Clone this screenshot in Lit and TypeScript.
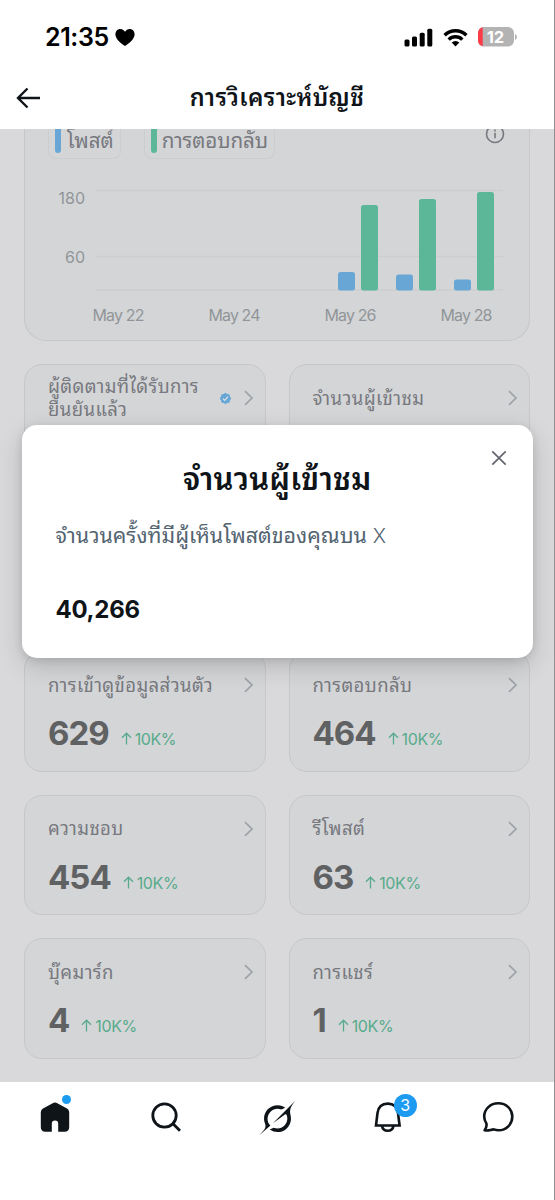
import { LitElement, html, svg, css } from "lit";
import { customElement, property } from "lit/decorators.js";

@customElement("metric-card")
class MetricCard extends LitElement {
  @property() label = "";
  @property() second = "";
  @property() value = "";
  @property({ type: Boolean }) verified = false;

  static styles = css`
    :host { display: block; box-sizing: border-box; height: 120.5px; border: 1.5px solid #c5c7ca; border-radius: 18px;
      background: #d4d5d7; padding: 21px 11px 0 23px; color: #77797f; }
    .top { display: flex; align-items: center; height: 24px; }
    .label { flex: 1; font-size: 18.5px; line-height: 23px; white-space: nowrap; letter-spacing: 0.4px; }
    .badge { margin-right: 12px; }
    svg { display: block; }
    .bottom { display: flex; align-items: baseline; margin-top: 15px; height: 42px; }
    .value { font-size: 33px; line-height: 42px; font-weight: 700; color: #5f6163; letter-spacing: -1px; }
    .arrow { margin: 0 3px 0 12px; }
    .pct { font-size: 16px; color: #57ab8b; letter-spacing: -0.4px; }
  `;

  render() {
    return html`
      <div class="top">
        <div class="label">${this.label}${this.second ? html`<br />${this.second}` : ""}</div>
        ${this.verified
          ? html`<svg class="badge" width="13" height="13" viewBox="0 0 22 22"><path fill="#68a7d5" d="M20.400 11c0-1.300-.8-2.500-2-3.100.4-1.300.1-2.700-.8-3.500-.9-.9-2.200-1.200-3.500-.8C13.500 2.400 12.300 1.600 11 1.600S8.500 2.400 7.900 3.600c-1.300-.4-2.600-.1-3.500.8s-1.200 2.200-.8 3.500C2.400 8.500 1.600 9.700 1.600 11s.8 2.500 2 3.100c-.4 1.300-.1 2.600.8 3.500s2.200 1.200 3.500.8c.6 1.200 1.800 2 3.100 2s2.500-.8 3.100-2c1.300.4 2.600.1 3.500-.8s1.200-2.200.8-3.500c1.200-.6 2-1.800 2-3.100z"/><path d="M6.800 11.300l2.900 2.900 5.500-6.200" fill="none" stroke="#dfe3e6" stroke-width="2"/></svg>`
          : ""}
        <svg width="10" height="16" viewBox="0 0 10 16"><path d="M1 1.200L8 8l-7 6.800" fill="none" stroke="#9da3a9" stroke-width="1.700"/></svg>
      </div>
      ${this.value
        ? html`<div class="bottom"><span class="value">${this.value}</span>
            <svg class="arrow" width="11" height="13" viewBox="0 0 11 13"><path d="M5.500 12.500V1.200M1 5.700l4.500-4.500L10 5.700" fill="none" stroke="#57ab8b" stroke-width="1.300"/></svg><span class="pct">10K%</span></div>`
        : ""}
    `;
  }
}

@customElement("app-root")
class AppRoot extends LitElement {
  static styles = css`
    :host { display: block; position: relative; box-sizing: border-box; width: 555px; height: 1200px; overflow: hidden;
      background: #fff; border-right: 1px solid #8f8f91; font-family: Inter, "Liberation Sans", "Noto Sans Thai Looped", Loma, "Noto Sans Thai", sans-serif; color: #0f1419; }
    svg { display: block; }
    .status { display: flex; align-items: center; height: 74px; padding: 0 37.5px 0 45px; box-sizing: border-box; }
    .time { font-size: 25px; font-weight: 600; letter-spacing: -0.4px; color: #000; }
    .heart { margin-left: 6.5px; }
    .signal { margin-left: auto; }
    .wifi { margin-left: 10px; }
    .battery { margin-left: 9.5px; }
    .bar { display: grid; grid-template-columns: 60px 1fr 60px; align-items: center; height: 55px; padding-bottom: 7px; box-sizing: border-box; }
    .back { margin-left: 16px; }
    .bar h1 { margin: 0; text-align: center; font-size: 23.5px; font-weight: 600; line-height: 40px; letter-spacing: 0.4px; white-space: nowrap; }
    .content { height: 952.5px; box-sizing: border-box; background: #d9d9db; overflow: hidden; padding: 0 24px; }
    .chart { box-sizing: border-box; width: 506px; height: 212px; background: #d4d5d7; border: 1.5px solid #c5c7ca; border-top: 0; border-radius: 0 0 22px 22px; }
    .legend { display: flex; height: 30px; padding: 0 23px; }
    .chip { display: flex; align-items: center; box-sizing: border-box; height: 30px; border: 1.5px solid #cbcdd0; border-top: 0;
      border-radius: 0 0 8px 8px; padding: 0 6px 5px 6px; font-size: 20.6px; line-height: 24px; color: #77797f; white-space: nowrap; }
    .chip i { width: 6px; height: 24px; border-radius: 0 0 3px 3px; background: #68a7d5; margin-right: 6px; }
    .chip.green { margin-left: 23px; letter-spacing: -0.1px; }
    .chip.green i { background: #5bb798; margin-right: 5px; }
    .info { margin: -5px 1px 0 auto; }
    .grid { display: grid; grid-template-columns: 241.5px 241.5px; column-gap: 23px; row-gap: 23px; margin-top: 23px; }
    .nav { display: grid; grid-template-columns: repeat(5, 110.75px); height: 118.5px; align-items: start; padding: 18px 0 0 0; box-sizing: border-box; }
    .item { display: flex; justify-content: center; position: relative; }
    .dot { position: absolute; left: 62px; top: -4.5px; width: 9px; height: 9px; border-radius: 50%; background: #1d9bf0; }
    .count { position: absolute; left: 61.5px; top: -5.5px; width: 23px; height: 23px; border-radius: 50%; background: #1d9bf0; color: #fff; font-size: 16px; line-height: 23px; text-align: center; }
    .modal { position: absolute; left: 21.5px; top: 425px; width: 511.5px; height: 232.5px; box-sizing: border-box; background: #fff; border-radius: 15px;
      box-shadow: 0 8px 24px rgba(0,0,0,.16), 0 2px 8px rgba(0,0,0,.1); padding: 32px 34px 0; }
    .close { position: absolute; right: 26px; top: 25px; }
    .modal h2 { margin: 0; text-align: center; font-size: 31px; line-height: 44px; font-weight: 600; letter-spacing: 0.2px; }
    .modal p { margin: 18.5px 0 0; font-size: 21.4px; line-height: 30px; color: #536471; white-space: nowrap; }
    .modal p span { font-size: 20px; font-weight: 300; }
    .modal strong { display: block; margin-top: 44.5px; font-size: 24px; line-height: 30px; font-weight: 700; letter-spacing: -0.3px; }
  `;

  private bars = [
    { x: 313, y: 143, c: "#68a7d5" }, { x: 336, y: 76, c: "#5bb798" },
    { x: 371, y: 145.5, c: "#68a7d5" }, { x: 394, y: 70, c: "#5bb798" },
    { x: 429, y: 150.5, c: "#68a7d5" }, { x: 452, y: 63, c: "#5bb798" },
  ];

  render() {
    return html`
      <div class="status">
        <span class="time">21:35</span>
        <svg class="heart" width="20" height="19" viewBox="0 0 20 19"><path d="M10 18C6 15.200.4 11.300.4 6.200.4 3.100 2.600.9 5.300.9c2 0 3.700 1.100 4.700 2.900C11 2 12.700.9 14.700.9c2.700 0 4.900 2.200 4.900 5.300C19.600 11.300 14 15.200 10 18z"/></svg>
        <svg class="signal" width="29" height="19" viewBox="0 0 29 19"><rect x=".5" y="11.5" width="5" height="7" rx="1.500"/><rect x="8" y="8.500" width="5" height="10" rx="1.500"/><rect x="15.700" y="4.700" width="5" height="13.800" rx="1.500"/><rect x="23.300" y=".7" width="5" height="17.800" rx="1.500"/></svg>
        <svg class="wifi" width="25" height="19" viewBox="0 0 25 19"><g fill="none" stroke="#000" stroke-width="3.400"><path d="M1.600 7.300a15.500 15.500 0 0 1 21.800 0"/><path d="M5.700 11.600a9.700 9.700 0 0 1 13.600 0"/></g><path d="M8.700 14.600a5.500 5.500 0 0 1 7.600 0L12.500 18.600z"/></svg>
        <svg class="battery" width="39" height="20" viewBox="0 0 39 20"><defs><clipPath id="b"><rect width="36" height="19.500" rx="6"/></clipPath></defs><g clip-path="url(#b)"><rect width="36" height="20" fill="#b3b3b4"/><rect width="4.700" height="20" fill="#fb3b46"/></g><path d="M37 7v6q2-1 2-3t-2-3z" fill="#b3b3b4"/><text x="17.500" y="15.700" text-anchor="middle" font-size="16.500" font-weight="700" fill="#fff">12</text></svg>
      </div>
      <div class="bar">
        <svg class="back" width="25" height="22" viewBox="0 0 25 22"><path d="M24 11H2M11.500 1.500L2 11l9.500 9.500" fill="none" stroke="#0f1419" stroke-width="2.400"/></svg>
        <h1>การวิเคราะห์บัญชี</h1>
      </div>
      <div class="content">
        <div class="chart">
          <div class="legend">
            <div class="chip"><i></i>โพสต์</div>
            <div class="chip green"><i></i>การตอบกลับ</div>
            <svg class="info" width="20" height="20" viewBox="0 0 20 20"><g fill="none" stroke="#77797f" stroke-width="1.600"><circle cx="10" cy="10" r="8.500"/><path d="M10 8.800v5.500M10 5.500v2"/></g></svg>
          </div>
          <svg width="503" height="180" viewBox="0 30 503 180" font-size="16" fill="#919599">
            <g stroke="#cccdd0" stroke-width="1.300"><path d="M71 61.500H478M71 127.500H478M71 161H478"/></g>
            ${this.bars.map((b) => svg`<rect x=${b.x} y=${b.y} width="17" height=${161.5 - b.y} rx="2.500" fill=${b.c}/>`)}
            <text x="60" y="74.500" text-anchor="end">180</text>
            <text x="60" y="133.500" text-anchor="end">60</text>
            <text x="67.500" y="192.300" textLength="52">May 22</text>
            <text x="183.500" y="192.300" textLength="52">May 24</text>
            <text x="299.500" y="192.300" textLength="52">May 26</text>
            <text x="415.500" y="192.300" textLength="52">May 28</text>
          </svg>
        </div>
        <div class="grid">
          <metric-card label="ผู้ติดตามที่ได้รับการ" second="ยืนยันแล้ว" verified></metric-card>
          <metric-card label="จำนวนผู้เข้าชม"></metric-card>
          <metric-card></metric-card>
          <metric-card></metric-card>
          <metric-card label="การเข้าดูข้อมูลส่วนตัว" value="629"></metric-card>
          <metric-card label="การตอบกลับ" value="464"></metric-card>
          <metric-card label="ความชอบ" value="454"></metric-card>
          <metric-card label="รีโพสต์" value="63"></metric-card>
          <metric-card label="บุ๊คมาร์ก" value="4"></metric-card>
          <metric-card label="การแชร์" value="1"></metric-card>
        </div>
      </div>
      <div class="nav">
        <div class="item"><svg width="34" height="34" viewBox="0 0 34 34"><path fill="#0f1419" d="M14.700 3.200q2.300-1.200 4.600 0L29 8.500q2.200 1.300 2.200 3.700V27q0 4.700-4.700 4.700H20.200V23.500q0-3-3.200-3t-3.200 3v8.200H7.500Q2.800 31.700 2.800 27V12.200q0-2.400 2.200-3.700z"/></svg><span class="dot"></span></div>
        <div class="item"><svg width="34" height="34" viewBox="0 0 34 34"><g fill="none" stroke="#0f1419" stroke-width="2.800"><circle cx="15.500" cy="15.500" r="11.700"/><path d="M24 23.700l7 7"/></g></svg></div>
        <div class="item"><svg width="36" height="36" viewBox="0 0 33 33" fill="#0f1419"><path d="M12.750 21.330L23.710 13.220C24.250 12.830 25.010 12.980 25.270 13.610C26.620 16.860 26.020 20.770 23.340 23.460C20.660 26.140 16.930 26.730 13.520 25.390L9.790 27.120C15.140 30.780 21.630 29.880 25.680 25.820C28.900 22.600 29.900 18.210 28.970 14.250L28.980 14.260C27.630 8.450 29.310 6.130 32.750 1.380L33 1.030L28.460 5.580V5.560L12.740 21.330M10.480 23.300C6.640 19.630 7.300 13.950 10.570 10.670C12.990 8.250 16.960 7.260 20.430 8.720L24.150 7C23.480 6.510 22.620 5.990 21.640 5.630C17.190 3.790 11.870 4.710 8.250 8.330C4.780 11.810 3.680 17.150 5.560 21.720C6.960 25.140 4.660 27.550 2.350 29.990C1.530 30.850.710 31.710.040 32.620L10.480 23.300"/></svg></div>
        <div class="item"><svg width="34" height="34" viewBox="0 0 34 34"><g fill="none" stroke="#0f1419" stroke-width="2.600"><path d="M5 25.500L6.500 13C7.300 7 11 3.600 16.800 3.600S26.200 7 27 13l1.600 12.500z"/><path d="M11 26c.5 3 2.900 4.700 5.700 4.700S22 29 22.500 26"/></g></svg><span class="count">3</span></div>
        <div class="item"><svg width="34" height="34" viewBox="0 0 34 34"><path fill="none" stroke="#0f1419" stroke-width="2.600" stroke-linejoin="round" d="M3.600 30.200c1.800-2.200 2.300-4.300 1.800-6.800C3.900 21.300 3.200 19 3.200 16.600 3.200 9 9.500 3.300 17.300 3.300S31.300 9 31.300 16.600 25.300 30.300 17.500 30.300c-1.700 0-3.200-.3-4.700-.9-3.200.2-5.500 1.700-9.200.8z"/></svg></div>
      </div>
      <div class="modal">
        <svg class="close" width="16" height="16" viewBox="0 0 16 16"><path d="M1.300 1.300l13.400 13.400M14.700 1.300L1.300 14.700" fill="none" stroke="#62666c" stroke-width="1.700"/></svg>
        <h2>จำนวนผู้เข้าชม</h2>
        <p>จำนวนครั้งที่มีผู้เห็นโพสต์ของคุณบน <span>X</span></p>
        <strong>40,266</strong>
      </div>
    `;
  }
}
